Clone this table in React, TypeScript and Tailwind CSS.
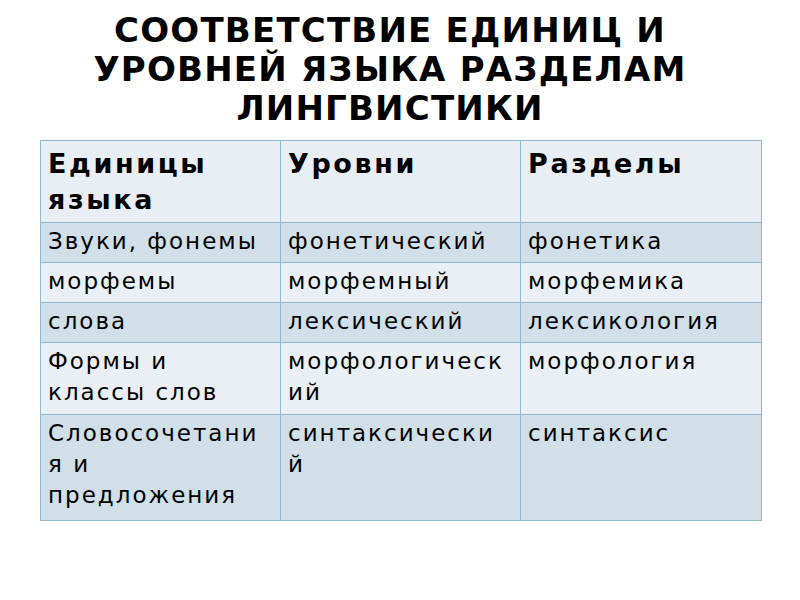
const rows: { cells: string[][]; dark: boolean; h: string }[] = [
  { cells: [["Звуки, фонемы"], ["фонетический"], ["фонетика"]], dark: true, h: "h-[40px]" },
  { cells: [["морфемы"], ["морфемный"], ["морфемика"]], dark: false, h: "h-[40px]" },
  { cells: [["слова"], ["лексический"], ["лексикология"]], dark: true, h: "h-[40px]" },
  {
    cells: [["Формы и", "классы слов"], ["морфологическ", "ий"], ["морфология"]],
    dark: false,
    h: "h-[72px]",
  },
  {
    cells: [["Словосочетани", "я и", "предложения"], ["синтаксически", "й"], ["синтаксис"]],
    dark: true,
    h: "h-[106px]",
  },
]

export default function App() {
  return (
    <div className="w-[800px] h-[600px] bg-white font-['DejaVu_Sans',sans-serif] text-black">
      {/* Title */}
      <div className="pt-[11px] pr-[20px] text-center text-[34px] font-bold leading-[39px] tracking-[1.2px]">
        <div>СООТВЕТСТВИЕ ЕДИНИЦ И</div>
        <div>УРОВНЕЙ ЯЗЫКА РАЗДЕЛАМ</div>
        <div>ЛИНГВИСТИКИ</div>
      </div>

      {/* Table */}
      <div className="pl-[40px] pt-[12px]">
        <table className="w-[721px] table-fixed border-collapse border border-[#8fb9cd]">
          <colgroup>
            <col className="w-[240px]" />
            <col className="w-[240px]" />
            <col className="w-[241px]" />
          </colgroup>
          <thead>
            <tr className="h-[82px] bg-[#e9eef4]">
              <th className="border border-[#8fb9cd] px-[7px] pt-[5px] align-top text-left text-[27px] font-bold leading-[36px] tracking-[2.6px] whitespace-nowrap">
                Единицы
                <br />
                языка
              </th>
              <th className="border border-[#8fb9cd] px-[7px] pt-[5px] align-top text-left text-[27px] font-bold leading-[36px] tracking-[2.6px] whitespace-nowrap">
                Уровни
              </th>
              <th className="border border-[#8fb9cd] px-[7px] pt-[5px] align-top text-left text-[27px] font-bold leading-[36px] tracking-[2.6px] whitespace-nowrap">
                Разделы
              </th>
            </tr>
          </thead>
          <tbody>
            {rows.map((r, i) => (
              <tr key={i} className={`${r.h} ${r.dark ? "bg-[#d0dfe8]" : "bg-[#e9eff4]"}`}>
                {r.cells.map((c, j) => (
                  <td
                    key={j}
                    className="border border-[#8fb9cd] px-[7px] pt-[3px] align-top text-[23px] leading-[31px] tracking-[2px] whitespace-nowrap"
                  >
                    {c.map((line, k) => (
                      <div key={k}>{line}</div>
                    ))}
                  </td>
                ))}
              </tr>
            ))}
          </tbody>
        </table>
      </div>
    </div>
  )
}
